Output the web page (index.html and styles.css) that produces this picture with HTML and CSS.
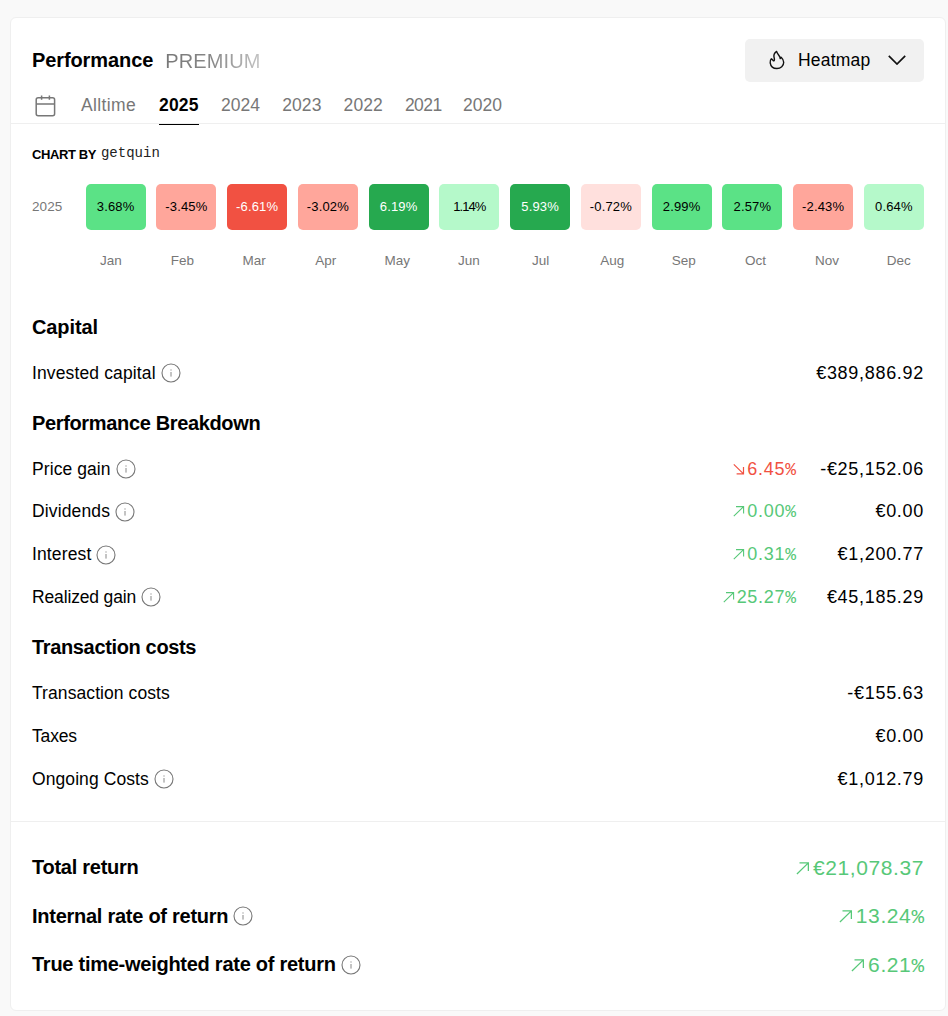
FILE: index.html
```html
<!DOCTYPE html>
<html lang="en">
<head>
<meta charset="utf-8">
<title>Performance</title>
<link rel="stylesheet" href="styles.css">
</head>
<body>
<svg width="0" height="0" class="defs">
  <symbol id="info" viewBox="0 0 20 20"><circle cx="10" cy="10" r="9" fill="none" stroke="#777" stroke-width="1.1"/><path d="M10 9v4.6M10 6.4v1.2" stroke="#888" stroke-width="1"/></symbol>
  <symbol id="up" viewBox="0 0 12 12"><path d="M.8 11.2L10.6 1.6M3 1.6H10.6V8.6" fill="none" stroke="currentColor" stroke-width="1.1"/></symbol>
  <symbol id="down" viewBox="0 0 12 12"><path d="M.8 1.4L10.5 10.9M10.5 4v6.9H3.6" fill="none" stroke="currentColor" stroke-width="1.2"/></symbol>
</svg>
<main class="card">
  <header class="head">
    <h1 class="title">Performance</h1><span class="premium">PREMIUM</span>
    <button class="picker">
      <svg class="flame" viewBox="0 0 16 20"><path d="M7.6 1.4C5.2 3 4.4 5.4 5.2 8C5.8 10 5.2 11.2 4.4 10.8C3.6 10.4 3.6 9.2 2.4 8.8C1.3 10 1 11.4 1.2 12.8C1.7 16.2 4.4 18.5 7.9 18.5C11.8 18.5 14.7 15.8 14.7 12.2C14.7 9.8 13.2 8.4 12 7.2L11.2 8.6C11.4 6 8.4 4.6 7.6 1.4Z" fill="none" stroke="#111" stroke-width="1.4" stroke-linejoin="round"/></svg>
      <span>Heatmap</span>
      <svg class="chev" viewBox="0 0 18 10"><path d="M.8 .8L9 9L17.2 .8" fill="none" stroke="#111" stroke-width="1.7"/></svg>
    </button>
  </header>
  <nav class="tabs">
    <svg class="cal" viewBox="0 0 21 22"><rect x="1.2" y="2.8" width="18.4" height="18" rx="2" fill="none" stroke="#777" stroke-width="1.5"/><path d="M1.2 9h18.4M6.6 .6v4.2M14.4 .6v4.2" stroke="#777" stroke-width="1.5"/></svg>
    <span class="tab all">Alltime</span><span class="tab on">2025</span><span class="tab">2024</span><span class="tab">2023</span><span class="tab">2022</span><span class="tab narrow">2021</span><span class="tab">2020</span>
  </nav>
  <div class="by"><b>CHART BY</b><span>getquin</span></div>
  <div class="heat">
    <span class="year">2025</span>
    <div class="cells">
      <span class="c g2">3.68%</span><span class="c r2">-3.45%</span><span class="c r3">-6.61%</span><span class="c r2">-3.02%</span><span class="c g3">6.19%</span><span class="c g1 ones">1.14%</span><span class="c g3">5.93%</span><span class="c r1">-0.72%</span><span class="c g2">2.99%</span><span class="c g2">2.57%</span><span class="c r2">-2.43%</span><span class="c g1">0.64%</span>
    </div>
  </div>
  <div class="months"><span>Jan</span><span>Feb</span><span>Mar</span><span>Apr</span><span>May</span><span>Jun</span><span>Jul</span><span>Aug</span><span>Sep</span><span>Oct</span><span>Nov</span><span>Dec</span></div>

  <section class="details">
    <h2 class="wide">Capital</h2>
    <div class="row"><span class="loose">Invested capital</span><svg class="info"><use href="#info"/></svg><span class="num">€389,886.92</span></div>
    <h2>Performance Breakdown</h2>
    <div class="row"><span>Price gain</span><svg class="info"><use href="#info"/></svg><span class="pct neg"><svg class="arr"><use href="#down"/></svg>6.45<i>%</i></span><span class="num">-€25,152.06</span></div>
    <div class="row"><span class="loose">Dividends</span><svg class="info"><use href="#info"/></svg><span class="pct"><svg class="arr"><use href="#up"/></svg>0.00<i>%</i></span><span class="num">€0.00</span></div>
    <div class="row"><span class="loose">Interest</span><svg class="info"><use href="#info"/></svg><span class="pct"><svg class="arr"><use href="#up"/></svg>0.31<i>%</i></span><span class="num">€1,200.77</span></div>
    <div class="row"><span class="tight">Realized gain</span><svg class="info"><use href="#info"/></svg><span class="pct"><svg class="arr"><use href="#up"/></svg>25.27<i>%</i></span><span class="num">€45,185.29</span></div>
    <h2>Transaction costs</h2>
    <div class="row"><span>Transaction costs</span><span class="num">-€155.63</span></div>
    <div class="row"><span class="tight">Taxes</span><span class="num">€0.00</span></div>
    <div class="row"><span>Ongoing Costs</span><svg class="info"><use href="#info"/></svg><span class="num">€1,012.79</span></div>
  </section>
  <section class="totals">
    <div class="total"><span>Total return</span><span class="sum"><svg class="arr"><use href="#up"/></svg>€21,078.37</span></div>
    <div class="total"><span>Internal rate of return</span><svg class="info"><use href="#info"/></svg><span class="sum"><svg class="arr"><use href="#up"/></svg>13.24<i>%</i></span></div>
    <div class="total"><span>True time-weighted rate of return</span><svg class="info"><use href="#info"/></svg><span class="sum"><svg class="arr"><use href="#up"/></svg>6.21<i>%</i></span></div>
  </section>
</main>
</body>
</html>
```
FILE: styles.css
```css
* { box-sizing: border-box; }
body { margin: 0; padding: 17px 2px 5px 10px; background: #f9f9f9; color: #000; font-family: "Liberation Sans", Arial, sans-serif; }
.defs { position: absolute; }
.card { height: 994px; background: #fff; border: 1px solid #efefef; border-radius: 6px; }
.head { display: flex; align-items: center; height: 64px; margin: 10px 0 1px; padding: 0 21px; }
.title { margin: 0; font-size: 20px; letter-spacing: -.1px; }
.premium { margin: 2px 0 0 12px; font-size: 20px; letter-spacing: .15px; background: linear-gradient(90deg, #777, #888 50%, #c4c4c4); -webkit-background-clip: text; background-clip: text; color: transparent; }
.picker { display: flex; align-items: center; margin-left: auto; width: 179px; height: 43px; padding: 0 18px 0 24px; border: 0; border-radius: 5px; background: #f1f1f1; font: 17.5px "Liberation Sans", Arial, sans-serif; letter-spacing: .2px; color: #000; }
.picker span { padding-top: 1px; }
.flame { width: 16px; height: 20px; margin-right: 13px; }
.chev { width: 18px; height: 10px; margin-left: auto; }
.tabs { display: flex; height: 31px; padding-left: 24px; border-bottom: 1px solid #efefef; color: #777; font-size: 17.5px; letter-spacing: .05px; }
.cal { width: 21px; height: 22px; margin: 2px 25px 0 0; }
.tab { height: 32px; margin-right: 22px; padding-top: 2px; width: 39.3px; white-space: nowrap; flex: none; }
.all { width: 56px; letter-spacing: .35px; }
.narrow { width: 36px; letter-spacing: -.5px; }
.on { color: #000; font-weight: bold; border-bottom: 1px solid #000; width: 40px; letter-spacing: .2px; }
.by { display: flex; align-items: center; height: 20px; margin: 20px 0 0 21px; font-size: 13px; }
.by b { letter-spacing: -.4px; }
.by span { margin: -2px 0 0 5px; font: 14px "Liberation Mono", monospace; color: #222; }
.heat { display: flex; align-items: center; margin: 20px 21px 0; }
.year { width: 53.5px; color: #777; font-size: 13.5px; letter-spacing: .1px; padding-bottom: 1px; }
.cells { flex: 1; display: grid; grid-template-columns: repeat(12, 1fr); gap: 10.6px; }
.c { height: 46px; padding-bottom: 1px; display: flex; align-items: center; justify-content: center; border-radius: 5px; font-size: 13px; letter-spacing: .15px; }
.ones { letter-spacing: -.9px; }
.g1 { background: #b5f9ca; }
.g2 { background: #5be286; }
.g3 { background: #26a94f; color: #fff; }
.r1 { background: #ffe0dd; }
.r2 { background: #ffa69b; }
.r3 { background: #f15142; color: #fff; }
.months { display: grid; grid-template-columns: repeat(12, 71.64px); margin: 21px 0 0 64px; height: 20px; line-height: 20px; text-align: center; color: #777; font-size: 13.5px; letter-spacing: 0; }
.details { margin-top: 27.5px; padding: 0 21px 20.6px; border-bottom: 1px solid #efefef; }
h2 { margin: 0; height: 53.2px; padding-top: 4px; display: flex; align-items: center; font-size: 20px; letter-spacing: -.35px; }
.wide { letter-spacing: -.1px; }
.row { display: flex; align-items: center; height: 42.8px; font-size: 17.5px; letter-spacing: .08px; }
.tight { letter-spacing: -.15px; }
.loose { letter-spacing: .13px; }
.info { width: 20px; height: 20px; margin-left: 5px; flex: none; }
.num, .pct, .sum { letter-spacing: .7px; text-align: right; font-size: 18px; }
.num { margin-left: auto; }
.pct { margin-left: auto; color: #57c878; }
.pct + .num { width: 128px; margin-left: 0; }
.neg { color: #f15142; }
i { font-family: "Liberation Mono", monospace; font-style: normal; letter-spacing: 0; }
.pct .arr { width: 12px; height: 12px; margin-right: 2px; }
.totals { padding: 21px 21px 0; }
.total { display: flex; align-items: center; height: 48.7px; font-size: 20px; font-weight: bold; letter-spacing: -.26px; }
.sum { margin-left: auto; color: #57c878; font-weight: normal; font-size: 21px; letter-spacing: .6px; padding-top: 1px; }
.sum .arr { width: 14px; height: 14px; margin-right: 3px; }
```
